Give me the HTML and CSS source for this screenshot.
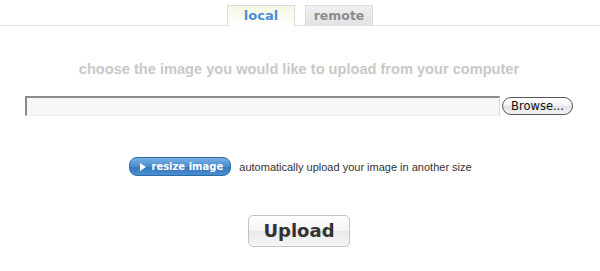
FILE: index.html
```html
<!DOCTYPE html>
<html>
<head>
<meta charset="utf-8">
<link rel="stylesheet" href="styles.css">
</head>
<body>
<div class="tabs">
  <div class="tab tab-active">local</div>
  <div class="tab">remote</div>
</div>
<h1 class="title">choose the image you would like to upload from your computer</h1>
<div class="file-row">
  <div class="file-field"></div>
  <button class="browse">Browse...</button>
</div>
<div class="resize-row">
  <button class="resize-btn"><span class="tri"></span>resize image</button>
  <span class="resize-note">automatically upload your image in another size</span>
</div>
<div class="upload-row">
  <button class="upload">Upload</button>
</div>
</body>
</html>
```
FILE: styles.css
```css
html, body { margin: 0; padding: 0; background: #fff; }
body { font-family: "Liberation Sans", Arial, sans-serif; width: 600px; }

.tabs {
  display: flex;
  justify-content: center;
  gap: 10px;
  padding-top: 5px;
  border-bottom: 1px solid #e2e2e2;
  padding-left: 0;
}
.tab {
  width: 66px;
  height: 19px;
  border: 1px solid #dcdcdc;
  border-bottom: none;
  background: linear-gradient(#f0f0f0, #e3e3e3);
  color: #8c8c8c;
  font: bold 12.5px/19px "DejaVu Sans", sans-serif;
  text-align: center;
}
.tab-active {
  background: linear-gradient(#f3f8e2, #ffffff);
  color: #4a90d6;
  font-size: 13px;
  height: 20px;
  margin-bottom: -1px;
}

.title {
  margin: 35px 0 0;
  padding-right: 2px;
  text-align: center;
  color: #c8c8c8;
  font: bold 14.6px/17px "Liberation Sans", Arial, sans-serif;
}

.file-row {
  display: flex;
  justify-content: center;
  align-items: center;
  gap: 2px;
  margin-top: 18px;
  padding-right: 2px;
}
.file-field {
  box-sizing: border-box;
  width: 475px;
  height: 20px;
  background: #f7f7f7;
  border-top: 2px solid #8a8a8a;
  border-left: 2px solid #8a8a8a;
  border-right: 1px solid #d8d8d8;
  border-bottom: 1px solid #eeeeee;
}
.browse {
  box-sizing: border-box;
  width: 71px;
  height: 18px;
  padding: 0;
  border: 1px solid #555;
  border-radius: 9px;
  background: linear-gradient(#ffffff, #f2f2f2 50%, #e2e2e2 51%, #f4f4f4);
  color: #111;
  font: 11.5px/16px "DejaVu Sans", sans-serif;
}

.resize-row {
  display: flex;
  justify-content: center;
  align-items: center;
  gap: 8px;
  margin-top: 41px;
  padding-left: 1px;
}
.resize-btn {
  box-sizing: border-box;
  width: 102px;
  height: 19px;
  padding: 0 0 0 3px;
  border: 1px solid #2c6aa8;
  border-radius: 8px;
  background: linear-gradient(#78b0e4, #4a8ccd 50%, #3577bc 51%, #4b8dd0);
  color: #fff;
  font: bold 10px/17px "DejaVu Sans", sans-serif;
  display: flex;
  align-items: center;
  justify-content: center;
  gap: 5px;
}
.tri {
  width: 0;
  height: 0;
  border-left: 6px solid #fff;
  border-top: 4px solid transparent;
  border-bottom: 4px solid transparent;
}
.resize-note {
  color: #333;
  font: 11px/14px "Liberation Sans", Arial, sans-serif;
}

.upload-row {
  display: flex;
  justify-content: center;
  margin-top: 39px;
  padding-right: 2px;
}
.upload {
  box-sizing: border-box;
  width: 102px;
  height: 32px;
  padding: 0;
  border: 1px solid #c4c4c4;
  border-radius: 5px;
  background: linear-gradient(#ffffff, #f4f4f4 50%, #e9e9e9 51%, #f6f6f6);
  color: #333;
  font: bold 18px/30px "DejaVu Sans", sans-serif;
}
```
